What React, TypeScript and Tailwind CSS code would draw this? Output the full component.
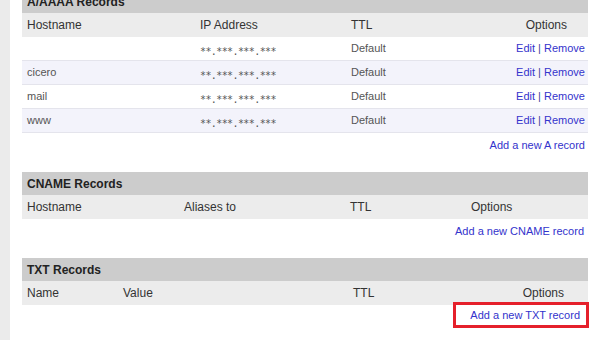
const rows = [
  { host: '', ip: '**.***.***.***', ttl: 'Default' },
  { host: 'cicero', ip: '**.***.***.***', ttl: 'Default' },
  { host: 'mail', ip: '**.***.***.***', ttl: 'Default' },
  { host: 'www', ip: '**.***.***.***', ttl: 'Default' },
];

const PanelHeader = ({ title }: { title: string }) => (
  <div className="h-[23px] bg-[#cccccc] pl-[5px] flex items-center font-bold text-[12px] text-[#222]">
    {title}
  </div>
);

export default function App() {
  return (
    <div
      className="flex w-[600px] h-[340px] overflow-hidden bg-white text-[12px]"
      style={{ fontFamily: '"Liberation Sans", Arial, sans-serif' }}
    >
      <div className="w-[10px] shrink-0 bg-[#ebebeb]" />
      <div className="w-[566px] ml-[12px] flex flex-col">
        {/* A/AAAA */}
        <div className="-mt-[10px]">
          <PanelHeader title="A/AAAA Records" />
          <div className="flex h-[24px] items-center bg-[#ececec] text-[#333]">
            <div className="w-[178px] pl-[5px]">Hostname</div>
            <div className="w-[151px]">IP Address</div>
            <div className="w-[120px]">TTL</div>
            <div className="flex-1 text-right pr-[21px]">Options</div>
          </div>
          {rows.map((r, i) => (
            <div
              key={i}
              className={`flex h-[24px] items-center border-b border-[#e4e4ec] text-[11px] text-[#555] ${
                i % 2 === 1 ? 'bg-[#f3f3fb]' : 'bg-white'
              }`}
            >
              <div className="w-[178px] pl-[5px]">{r.host}</div>
              <div
                className="w-[151px] text-[10px] tracking-[-0.6px] text-[#555] translate-y-[3px]"
                style={{ fontFamily: '"DejaVu Sans Mono", "Liberation Mono", monospace' }}
              >
                {r.ip}
              </div>
              <div className="w-[120px]">{r.ttl}</div>
              <div className="flex-1 text-right pr-[3px] text-[#3333cc]">
                <span>Edit</span> <span className="text-[#44449a]">|</span> <span>Remove</span>
              </div>
            </div>
          ))}
          <div className="h-[24px] flex items-center justify-end pr-[3px] text-[11px] text-[#3333cc]">
            Add a new A record
          </div>
        </div>

        {/* CNAME */}
        <div className="mt-[15px]">
          <PanelHeader title="CNAME Records" />
          <div className="flex h-[24px] items-center bg-[#ececec] text-[#333]">
            <div className="w-[162px] pl-[5px]">Hostname</div>
            <div className="w-[166px]">Aliases to</div>
            <div className="w-[121px]">TTL</div>
            <div className="flex-1">Options</div>
          </div>
          <div className="h-[24px] flex items-center justify-end pr-[4px] text-[11px] text-[#3333cc]">
            Add a new CNAME record
          </div>
        </div>

        {/* TXT */}
        <div className="mt-[15px]">
          <PanelHeader title="TXT Records" />
          <div className="flex h-[24px] items-center bg-[#ececec] text-[#333]">
            <div className="w-[101px] pl-[5px]">Name</div>
            <div className="w-[230px]">Value</div>
            <div className="flex-1">TTL</div>
            <div className="pr-[24px]">Options</div>
          </div>
          <div className="h-[24px] flex items-center justify-end -mr-[1px]">
            <span className="h-[26px] -mt-[3px] mb-[1px] flex items-center border-[3px] border-[#e5202b] pl-[14px] pr-[6px] text-[11px] text-[#3333cc]">
              Add a new TXT record
            </span>
          </div>
        </div>
      </div>
    </div>
  );
}
